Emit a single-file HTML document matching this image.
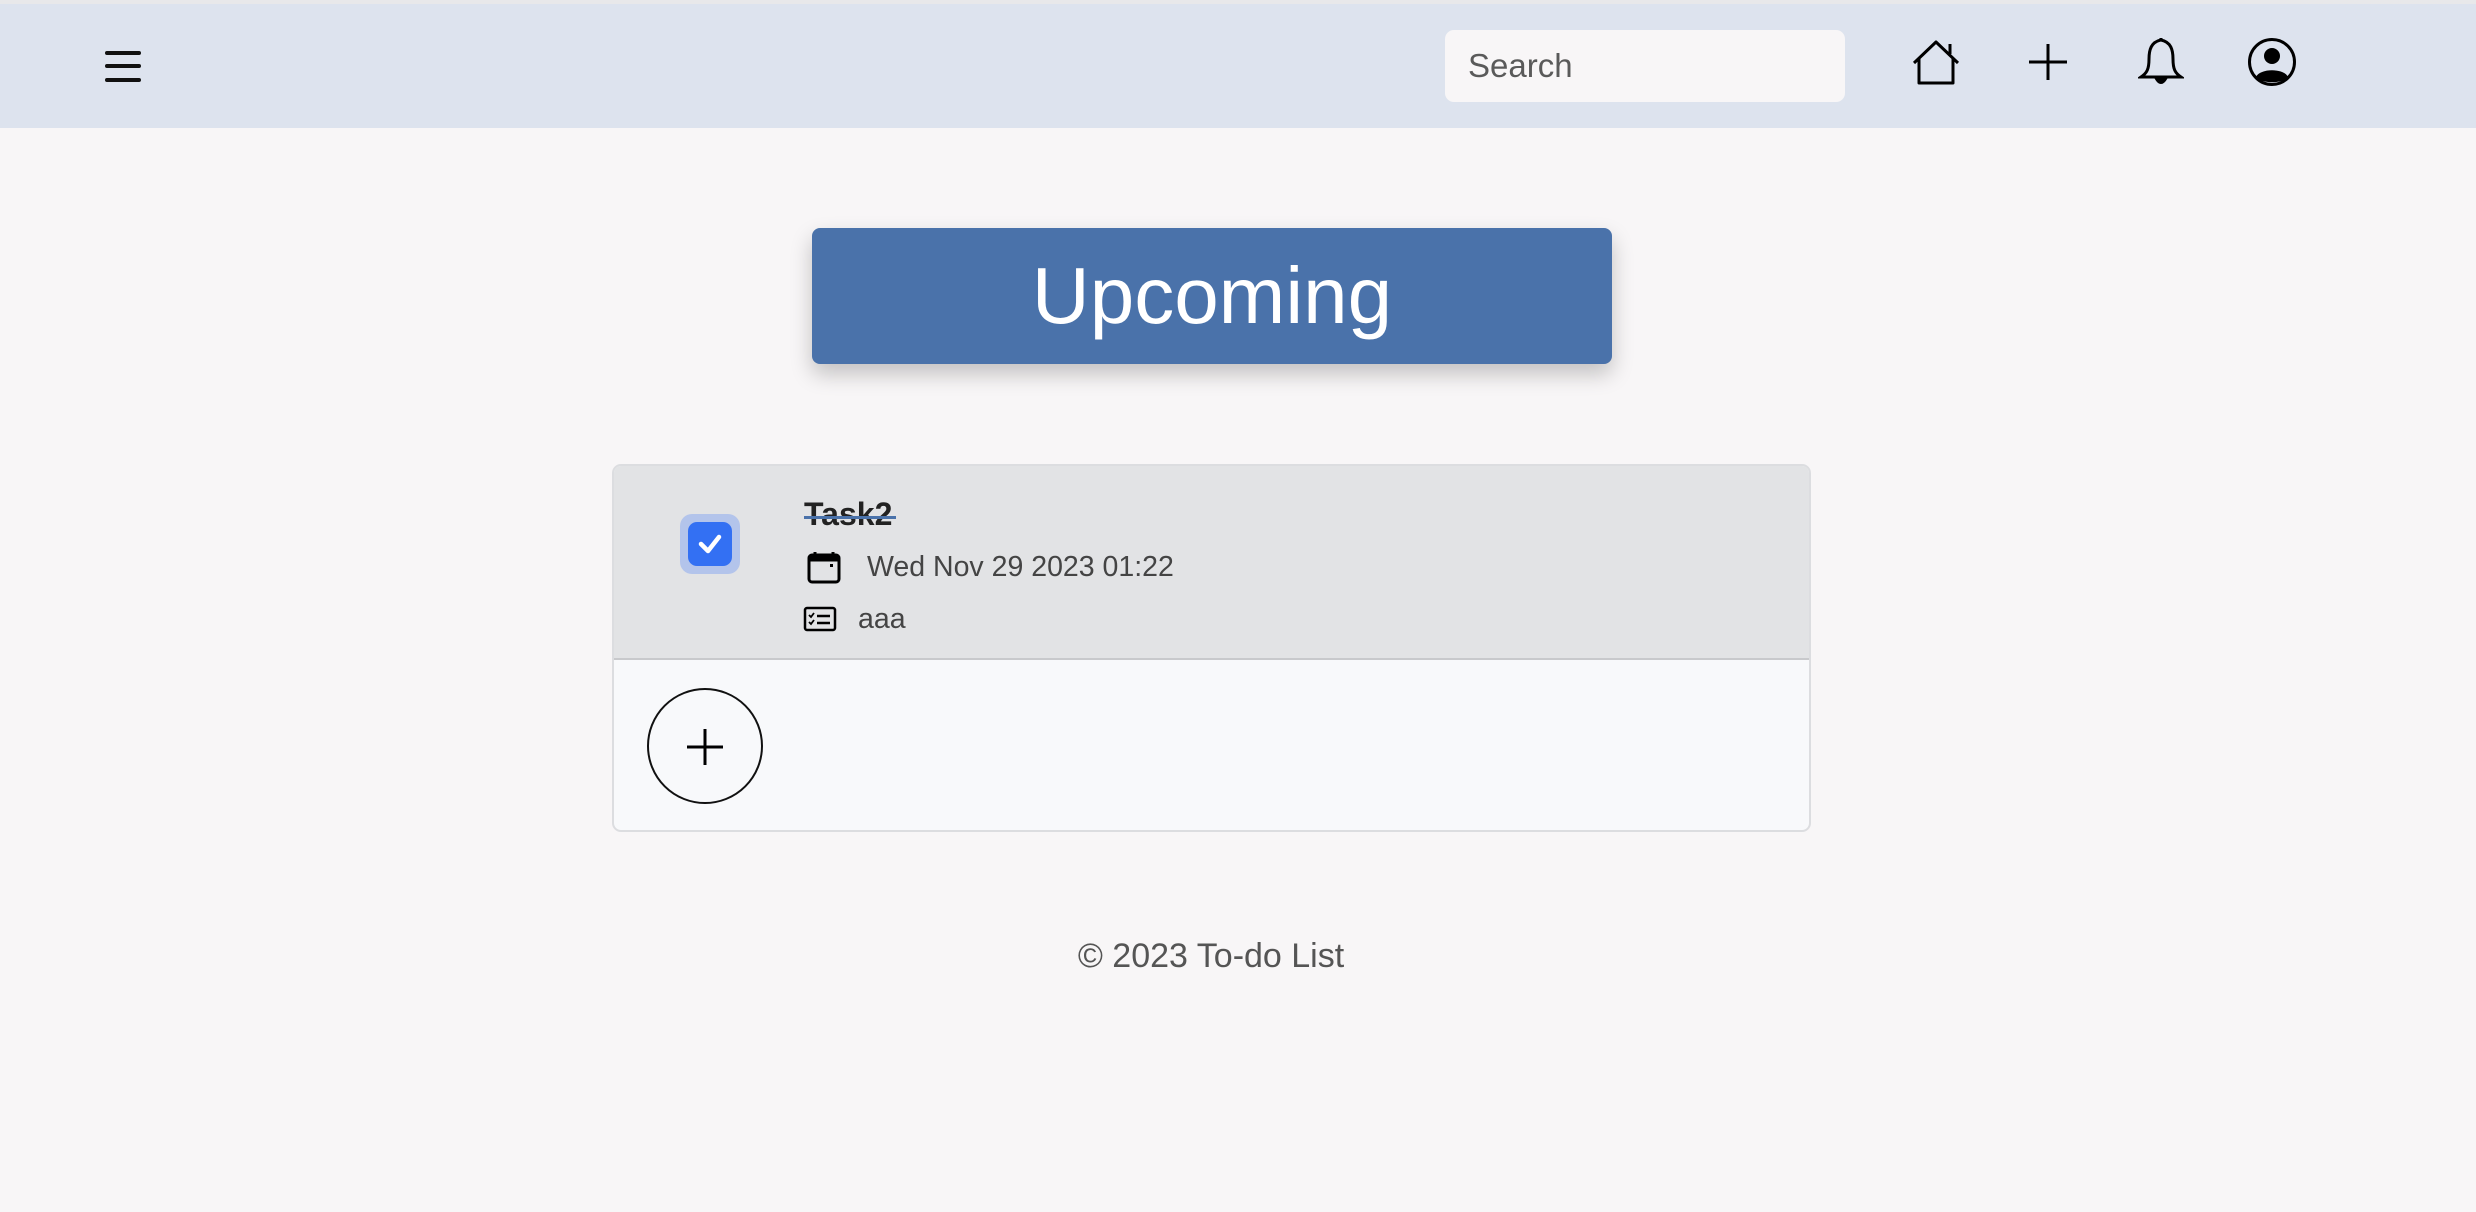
<!DOCTYPE html>
<html><head><meta charset="utf-8"><style>
*{margin:0;padding:0;box-sizing:border-box}
body{width:2476px;height:1212px;background:#f8f6f7;font-family:"Liberation Sans",Helvetica,Arial,sans-serif;position:relative;overflow:hidden}
.top{position:absolute;left:0;top:0;width:2476px;height:4px;background:#e8e8ea}
.nav{position:absolute;left:0;top:4px;width:2476px;height:124px;background:#dde3ee}
.ham{position:absolute;left:105px;width:36px;height:3.5px;background:#111;border-radius:2px}
.search{position:absolute;left:1445px;top:26px;width:400px;height:72px;background:#f8f6f7;border-radius:9px;font-size:33px;color:#5a5a5a;padding-left:23px;line-height:72px}
svg{position:absolute}
.up{position:absolute;left:812px;top:228px;width:800px;height:136px;background:#4a72aa;border-radius:8px;box-shadow:0 10px 22px rgba(0,0,0,.22);color:#fff;font-size:80px;text-align:center;line-height:136px}
.card{position:absolute;left:612px;top:464px;width:1199px;height:368px;border:2px solid #dcdde0;border-radius:9px;background:#f8f9fb;overflow:hidden}
.row{position:absolute;left:0;top:0;width:100%;height:194px;background:#e2e3e5;border-bottom:2px solid #c8c9cc}
.halo{position:absolute;left:66px;top:48px;width:60px;height:60px;border-radius:12px;background:#b3c4eb}
.cb{position:absolute;left:74px;top:56px;width:44px;height:44px;border-radius:9px;background:#3370f3}
.t{position:absolute;color:#222}
.plus{position:absolute;left:33px;top:222px;width:116px;height:116px;border:2px solid #111;border-radius:50%}
.foot{position:absolute;left:0;width:2422px;top:937px;text-align:center;font-size:34px;color:#555}
</style></head><body>
<div class="top"></div>
<div class="nav">
<div class="ham" style="top:47px"></div>
<div class="ham" style="top:60px"></div>
<div class="ham" style="top:74px"></div>
<div class="search">Search</div>
</div>
<svg style="left:1911px;top:40px" width="50" height="46" viewBox="0 0 50 46" fill="none" stroke="#000" stroke-width="3" stroke-linejoin="round"><path d="M3 23 L25 2 L47 23"/><path d="M8 19 V43 H42 V19"/><path d="M39 4 V14"/></svg>
<svg style="left:2028px;top:43px" width="40" height="38" viewBox="0 0 40 38" stroke="#000" stroke-width="3"><path d="M20 1V37M1 19H39"/></svg>
<svg style="left:2138px;top:37px" width="46" height="50" viewBox="0 0 46 50" fill="none" stroke="#000" stroke-width="3"><path d="M23 3 C13 5 11 13 11 22 C11 32 9 36 3 40 H43 C37 36 35 32 35 22 C35 13 33 5 23 3Z"/><path d="M23 1V4"/><path d="M18 41 Q23 50 28 41Z" fill="#000"/></svg>
<svg style="left:2247px;top:37px" width="50" height="50" viewBox="0 0 50 50"><circle cx="25" cy="25" r="22.5" fill="none" stroke="#000" stroke-width="3"/><circle cx="25" cy="19" r="8" fill="#000"/><path d="M9 40 C13 31 37 31 41 40 C35 47 15 47 9 40Z" fill="#000"/></svg>
<div class="up">Upcoming</div>
<div class="card">
<div class="row">
<div class="halo"></div><div class="cb"></div>
<svg style="left:84px;top:68px" width="24" height="20" viewBox="0 0 24 20"><path d="M3 10 L10 17 L21 3" fill="none" stroke="#fff" stroke-width="4.5" stroke-linecap="round" stroke-linejoin="round"/></svg>
<div class="t" style="left:190px;top:30px;font-size:32px;font-weight:bold;color:#222;line-height:36px">Task2</div>
<div style="position:absolute;left:190px;top:50px;width:92px;height:3px;background:#4a72aa"></div>
<svg style="left:193px;top:84px" width="34" height="34" viewBox="0 0 34 34" fill="none" stroke="#000" stroke-width="3"><rect x="2" y="5" width="30" height="27" rx="3"/><path d="M2 9H32" stroke-width="5"/><path d="M8 2V6M26 2V6"/><rect x="23" y="14" width="3" height="3" fill="#000" stroke="none"/></svg>
<div class="t" style="left:253px;top:83px;font-size:28.5px;color:#444;line-height:36px">Wed Nov 29 2023 01:22</div>
<svg style="left:189px;top:140px" width="34" height="26" viewBox="0 0 34 26" fill="none" stroke="#000" stroke-width="2.5"><rect x="2" y="2" width="30" height="22" rx="2"/><path d="M14 10H27M14 17H27"/><path d="M6 9l2 2 3-4M6 16l2 2 3-4" stroke-width="1.8"/></svg>
<div class="t" style="left:244px;top:135px;font-size:28.5px;color:#444;line-height:36px">aaa</div>
</div>
<div class="plus"></div>
<svg style="left:71px;top:261px" width="40" height="40" viewBox="0 0 40 40" stroke="#000" stroke-width="3"><path d="M20 2V38M2 20H38"/></svg>
</div>
<div class="foot">© 2023 To-do List</div>
</body></html>
